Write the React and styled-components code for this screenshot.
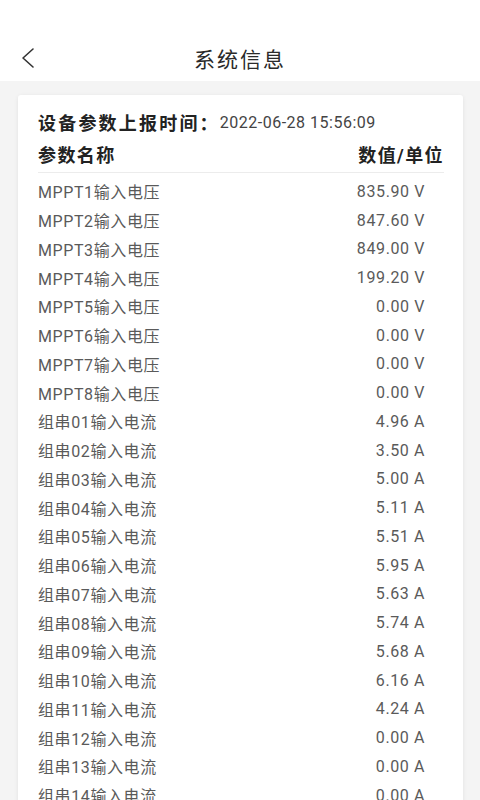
import React from "react";
import styled, { createGlobalStyle } from "styled-components";

const GlobalStyle = createGlobalStyle`
  html, body {
    margin: 0;
    padding: 0;
    background: #f4f4f4;
    font-family: Roboto, "Noto Sans CJK SC", sans-serif;
  }
`;

const Page = styled.div`
  width: 480px;
  height: 800px;
  overflow: hidden;
  background: #f4f4f4;
`;

const Header = styled.header`
  height: 46px;
  padding-top: 35px;
  background: #fff;
  display: grid;
  grid-template-columns: 60px 1fr 60px;
  align-items: center;
`;

const BackButton = styled.div`
  display: flex;
  align-items: center;
  padding-left: 20px;
`;

const Title = styled.h1`
  margin: 0;
  text-align: center;
  font-size: 21px;
  font-weight: 400;
  letter-spacing: 2px;
  color: #2a2a2a;
`;

const Body = styled.main`
  padding: 14px 17px 0 18px;
`;

const Card = styled.section`
  background: #fff;
  border-radius: 3px;
  box-shadow: 0 1px 4px rgba(0, 0, 0, 0.08);
  padding: 15px 19px 20px 20px;
`;

const ReportLine = styled.div`
  display: flex;
  align-items: center;
  height: 24px;
`;

const Label = styled.span`
  font-size: 18px;
  font-weight: 700;
  letter-spacing: ${(p) => (p.$wide ? "2.2px" : "1.4px")};
  color: #222;
`;

const DateText = styled.span`
  font-size: 16px;
  letter-spacing: 0.5px;
  color: #444;
`;

const HeadRow = styled.div`
  display: flex;
  justify-content: space-between;
  align-items: center;
  height: 24px;
  margin-top: 8px;
  padding-bottom: 6px;
  border-bottom: 1px solid #ececec;
`;

const List = styled.div`
  padding: 4px 19px 0 0;
`;

const Row = styled.div`
  display: flex;
  justify-content: space-between;
  align-items: center;
  height: 28.76px;
  font-size: 16px;
  letter-spacing: 0.6px;
  color: #5a5a5a;
`;

const rows = [
  ["MPPT1输入电压", "835.90 V"],
  ["MPPT2输入电压", "847.60 V"],
  ["MPPT3输入电压", "849.00 V"],
  ["MPPT4输入电压", "199.20 V"],
  ["MPPT5输入电压", "0.00 V"],
  ["MPPT6输入电压", "0.00 V"],
  ["MPPT7输入电压", "0.00 V"],
  ["MPPT8输入电压", "0.00 V"],
  ["组串01输入电流", "4.96 A"],
  ["组串02输入电流", "3.50 A"],
  ["组串03输入电流", "5.00 A"],
  ["组串04输入电流", "5.11 A"],
  ["组串05输入电流", "5.51 A"],
  ["组串06输入电流", "5.95 A"],
  ["组串07输入电流", "5.63 A"],
  ["组串08输入电流", "5.74 A"],
  ["组串09输入电流", "5.68 A"],
  ["组串10输入电流", "6.16 A"],
  ["组串11输入电流", "4.24 A"],
  ["组串12输入电流", "0.00 A"],
  ["组串13输入电流", "0.00 A"],
  ["组串14输入电流", "0.00 A"],
  ["组串15输入电流", "0.00 A"],
];

const App = () => {
  return (
    <Page>
      <GlobalStyle />
      <Header>
        <BackButton>
          <svg width="16" height="22" viewBox="0 0 16 22" fill="none">
            <path d="M13 2L3 11l10 9" stroke="#333" strokeWidth="1.6" strokeLinecap="round" strokeLinejoin="round" />
          </svg>
        </BackButton>
        <Title>系统信息</Title>
        <div />
      </Header>
      <Body>
        <Card>
          <ReportLine>
            <Label $wide>设备参数上报时间：</Label>
            <DateText>2022-06-28 15:56:09</DateText>
          </ReportLine>
          <HeadRow>
            <Label>参数名称</Label>
            <Label>数值/单位</Label>
          </HeadRow>
          <List>
            {rows.map(([name, value]) => (
              <Row key={name}>
                <span>{name}</span>
                <span>{value}</span>
              </Row>
            ))}
          </List>
        </Card>
      </Body>
    </Page>
  );
};

export default App;
